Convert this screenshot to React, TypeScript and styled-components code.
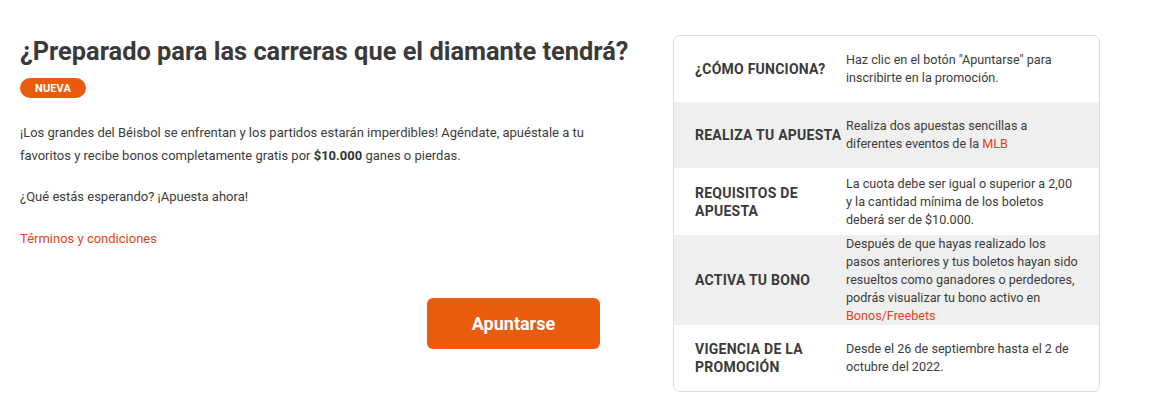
import React from "react";
import styled, { createGlobalStyle } from "styled-components";

const Global = createGlobalStyle`
  html, body { margin: 0; padding: 0; background: #ffffff; }
  body { font-family: Roboto, "Liberation Sans", Arial, sans-serif; color: #3c3c3c; }
  * { box-sizing: border-box; }
`;

const Page = styled.div`
  display: grid;
  grid-template-columns: 607px 427px;
  column-gap: 46px;
  padding: 35px 0 0 20px;
  width: 1100px;
  align-items: start;
`;

const Left = styled.div`
  display: flex;
  flex-direction: column;
  padding-top: 1px;
`;

const Title = styled.h1`
  margin: 0;
  font-size: 25.4px;
  line-height: 30px;
  font-weight: 700;
  color: #3a3a3a;
  white-space: nowrap;
`;

const Badge = styled.span`
  align-self: flex-start;
  margin-top: 12px;
  width: 66px;
  height: 20px;
  border-radius: 10px;
  background: #e95c0d;
  color: #ffffff;
  font-size: 11px;
  font-weight: 700;
  display: flex;
  align-items: center;
  justify-content: center;
  letter-spacing: 0.1px;
`;

const Para = styled.p<{ $gap: number }>`
  margin: ${(p) => p.$gap}px 0 0;
  max-width: 575px;
  font-size: 13px;
  line-height: 23px;
  color: #3c3c3c;
  strong { font-weight: 700; color: #333; }
`;

const Link = styled.a`
  color: #e6421b;
  text-decoration: none;
`;

const ButtonRow = styled.div`
  display: flex;
  margin-top: 48px;
  padding-left: 407px;
`;

const Button = styled.button`
  width: 173px;
  height: 51px;
  border: none;
  border-radius: 6px;
  background: #e95c0d;
  color: #ffffff;
  font-family: Roboto, "Liberation Sans", Arial, sans-serif;
  font-size: 18px;
  font-weight: 700;
  cursor: pointer;
`;

const Card = styled.div`
  border: 1px solid #dcdcdc;
  border-radius: 7px;
  overflow: hidden;
  background: #ffffff;
`;

const Row = styled.div<{ $shade?: boolean; $h: number }>`
  display: grid;
  grid-template-columns: 151px 1fr;
  align-items: center;
  min-height: ${(p) => p.$h}px;
  padding: 0 19px 0 21px;
  background: ${(p) => (p.$shade ? "#efefef" : "#ffffff")};
`;

const Label = styled.div`
  font-size: 14px;
  font-weight: 700;
  line-height: 18px;
  color: #3a3a3a;
  letter-spacing: 0.25px;
  padding-right: 4px;
  white-space: pre-line;
`;

const Value = styled.div`
  font-size: 12.6px;
  line-height: 18px;
  color: #3c3c3c;
`;

const rows: { label: string; value: React.ReactNode; h: number }[] = [
  {
    label: "¿CÓMO FUNCIONA?",
    value: <>Haz clic en el botón "Apuntarse" para inscribirte en la promoción.</>,
    h: 66,
  },
  {
    label: "REALIZA TU APUESTA",
    value: (
      <>
        Realiza dos apuestas sencillas a diferentes eventos de la <Link href="#">MLB</Link>
      </>
    ),
    h: 66,
  },
  {
    label: "REQUISITOS DE\nAPUESTA",
    value: (
      <>
        La cuota debe ser igual o superior a 2,00 y la cantidad mínima de los boletos
        deberá ser de $10.000.
      </>
    ),
    h: 67,
  },
  {
    label: "ACTIVA TU BONO",
    value: (
      <>
        Después de que hayas realizado los pasos anteriores y tus boletos hayan sido
        resueltos como ganadores o perdedores, podrás visualizar tu bono activo en{" "}
        <Link href="#">Bonos/Freebets</Link>
      </>
    ),
    h: 90,
  },
  {
    label: "VIGENCIA DE LA\nPROMOCIÓN",
    value: <>Desde el 26 de septiembre hasta el 2 de octubre del 2022.</>,
    h: 66,
  },
];

export default function App() {
  return (
    <>
      <Global />
      <Page>
        <Left>
          <Title>¿Preparado para las carreras que el diamante tendrá?</Title>
          <Badge>NUEVA</Badge>
          <Para $gap={23}>
            ¡Los grandes del Béisbol se enfrentan y los partidos estarán imperdibles!
            Agéndate, apuéstale a tu favoritos y recibe bonos completamente gratis por{" "}
            <strong>$10.000</strong> ganes o pierdas.
          </Para>
          <Para $gap={18}>¿Qué estás esperando? ¡Apuesta ahora!</Para>
          <Para $gap={19}>
            <Link href="#">Términos y condiciones</Link>
          </Para>
          <ButtonRow>
            <Button>Apuntarse</Button>
          </ButtonRow>
        </Left>
        <Card>
          {rows.map((r, i) => (
            <Row key={r.label} $shade={i % 2 === 1} $h={r.h}>
              <Label>{r.label}</Label>
              <Value>{r.value}</Value>
            </Row>
          ))}
        </Card>
      </Page>
    </>
  );
}
